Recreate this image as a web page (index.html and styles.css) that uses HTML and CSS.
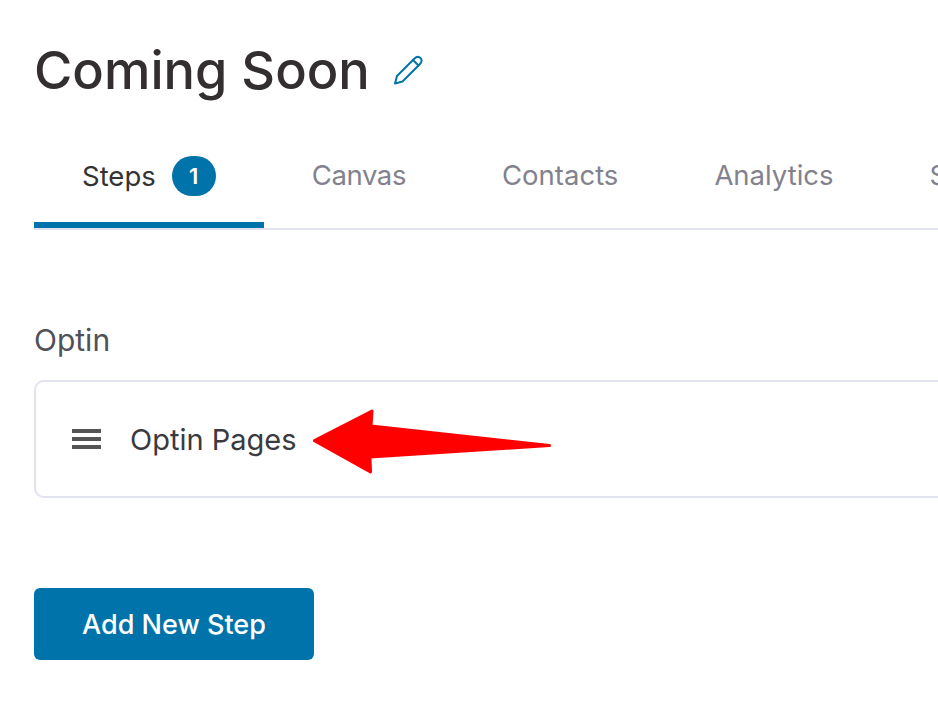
FILE: index.html
```html
<!DOCTYPE html>
<html lang="en">
<head>
<meta charset="utf-8">
<title>Coming Soon</title>
<link rel="stylesheet" href="styles.css">
</head>
<body>
<main class="page">
  <header class="title-row">
    <h1 class="title">Coming Soon</h1>
    <svg class="edit-icon" width="30" height="30" viewBox="0 0 30 30" fill="none" stroke="#0073aa" stroke-width="2" stroke-linejoin="round" stroke-linecap="round">
      <path d="M2 28.5 L4 21 L21.5 3.5 C23.5 1.5 26 1.5 27.5 3 C29 4.5 29 7 27 9 L9.5 26.5 Z"/>
      <path d="M20 5 L25.5 10.5"/>
    </svg>
  </header>
  <nav class="tabs">
    <a class="tab tab-active">Steps <span class="badge">1</span></a>
    <a class="tab tab-tight">Canvas</a>
    <a class="tab">Contacts</a>
    <a class="tab">Analytics</a>
    <a class="tab">Settings</a>
  </nav>
  <section class="group">
    <h2 class="group-title">Optin</h2>
    <div class="card">
      <svg class="drag-icon" width="29" height="20" viewBox="0 0 29 20" fill="#555555">
        <rect x="0" y="0" width="29" height="4"/>
        <rect x="0" y="8" width="29" height="4"/>
        <rect x="0" y="16" width="29" height="4"/>
      </svg>
      <span class="card-label">Optin Pages</span>
      <svg class="arrow" width="240" height="68" viewBox="0 0 240 68" fill="#ff0000" stroke="#ff0000" stroke-width="3" stroke-linejoin="round">
        <path d="M2.5 32.7 L60 3 L59 18 L237.5 37.5 L58 49 L58.5 64 Z"/>
      </svg>
    </div>
  </section>
  <button class="add-step">Add New Step</button>
</main>
</body>
</html>
```
FILE: styles.css
```css
html, body {
  margin: 0;
  padding: 0;
  background: #fff;
  overflow: hidden;
  height: 712px;
}
body {
  font-family: Inter, "Liberation Sans", sans-serif;
  color: #333;
}
.page {
  width: 1300px;
  padding: 36px 0 0 34px;
  box-sizing: border-box;
}
.title-row {
  display: flex;
  align-items: center;
  gap: 23px;
  height: 68px;
}
.title {
  margin: 0;
  font-size: 52.3px;
  font-weight: 500;
  line-height: 66px;
  color: #332f30;
}
.edit-icon {
  flex: none;
}
.tabs {
  display: flex;
  margin-top: 26px;
  border-bottom: 2px solid #e1e4ef;
  height: 98px;
  box-sizing: content-box;
}
.tab {
  display: flex;
  align-items: center;
  gap: 16px;
  padding: 0 48px;
  height: 90px;
  font-size: 27.5px;
  color: #82828e;
}
.tab-tight {
  letter-spacing: -0.4px;
}
.tab-active {
  color: #333;
  height: 92px;
  border-bottom: 6px solid #0073aa;
}
.badge {
  display: flex;
  align-items: center;
  justify-content: center;
  width: 44px;
  height: 40px;
  border-radius: 20px;
  background: #0073aa;
  color: #fff;
  font-size: 22px;
  font-weight: 600;
}
.group {
  margin-top: 94px;
}
.group-title {
  margin: 0 0 24px;
  font-size: 30px;
  font-weight: 400;
  line-height: 32px;
  color: #50505a;
}
.card {
  position: relative;
  display: flex;
  align-items: center;
  gap: 29px;
  height: 118px;
  padding-left: 36px;
  box-sizing: border-box;
  border: 2px solid #e1e4ef;
  border-radius: 10px;
}
.card-label {
  font-size: 29px;
  color: #3a3a40;
}
.arrow {
  position: absolute;
  left: 276px;
  top: 26px;
}
.add-step {
  display: block;
  margin-top: 90px;
  padding-top: 2px;
  width: 280px;
  height: 72px;
  border: 0;
  border-radius: 6px;
  background: #0073aa;
  color: #fff;
  font-family: inherit;
  font-size: 27px;
  font-weight: 500;
}
```
